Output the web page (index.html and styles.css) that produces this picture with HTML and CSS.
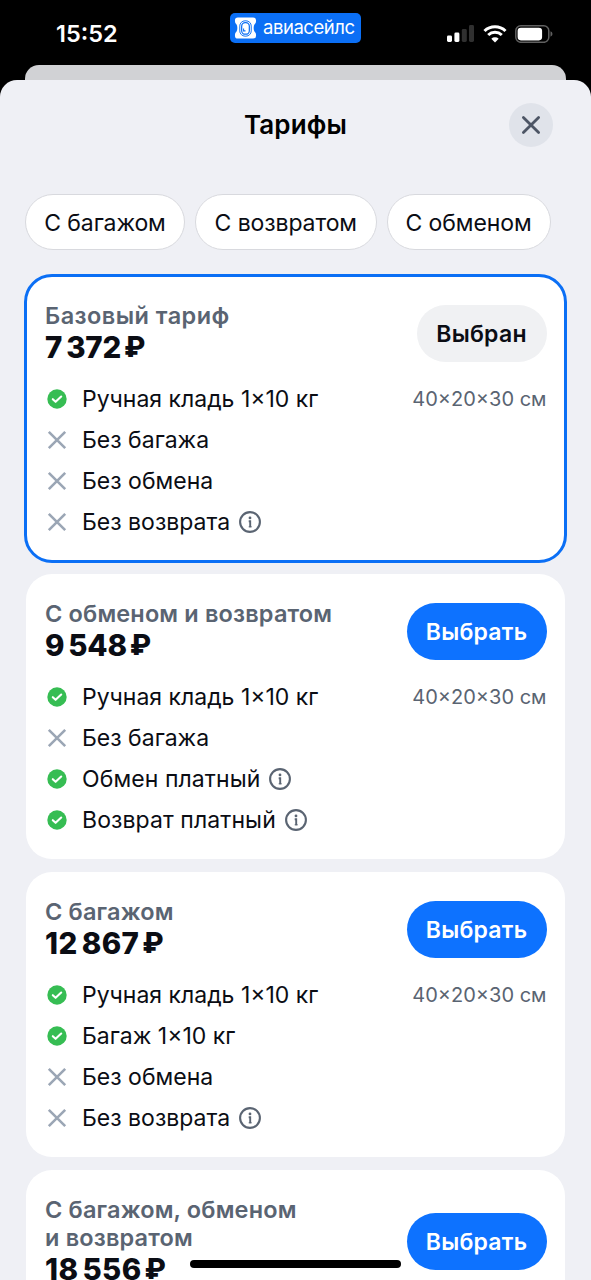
FILE: index.html
```html
<!DOCTYPE html>
<html lang="ru">
<head>
<meta charset="utf-8">
<title>Тарифы</title>
<link rel="stylesheet" href="styles.css">
</head>
<body>
<svg class="defs" width="0" height="0" aria-hidden="true">
  <symbol id="check" viewBox="0 0 24 24"><circle cx="12" cy="12" r="9.7" fill="#36bd53"/><path d="M7.800 12.200l2.800 2.600 5.600-5.300" fill="none" stroke="#fff" stroke-width="2.100" stroke-linecap="round" stroke-linejoin="round"/></symbol>
  <symbol id="cross" viewBox="0 0 24 24"><path d="M3.800 3.800l16.400 16.400M20.200 3.800L3.800 20.200" fill="none" stroke="#9ba6b5" stroke-width="2.600"/></symbol>
  <symbol id="info" viewBox="0 0 24 24"><circle cx="12" cy="12" r="9.9" fill="none" stroke="#5a6472" stroke-width="2.100"/><circle cx="12" cy="7.900" r="1.400" fill="#5a6472"/><path d="M10.700 11.200h1.500v6" fill="none" stroke="#5a6472" stroke-width="1.900"/><path d="M10.700 16.800h3" stroke="#5a6472" stroke-width="1"/></symbol>
</svg>
<div class="screen">
  <header class="status">
    <div class="time">15:52</div>
    <div class="brand">
      <svg class="brand-mark" viewBox="0 0 24 24"><path d="M4 1h16q3 0 3 3v1q0 2-1.500 3Q20.500 9 20.500 12t1 4Q23 17 23 19v1q0 3-3 3H4q-3 0-3-3v-1q0-2 1.500-3 1-1 1-4t-1-4Q1 7 1 5V4q0-3 3-3z" fill="#fff"/><rect x="6" y="4.500" width="12" height="16" rx="5.500" fill="none" stroke="#0b6ff5" stroke-width="1"/><rect x="8" y="6.500" width="8" height="12" rx="3.700" fill="none" stroke="#0b6ff5" stroke-width="1.300"/><path d="M10 12.500v2.500h2" fill="none" stroke="#0b6ff5" stroke-width="1.100"/></svg>
      <span class="brand-name">авиасейлс</span>
    </div>
    <div class="indicators">
      <svg width="28" height="18" viewBox="0 0 28 18"><rect x="0" y="10.500" width="5" height="6.500" rx="1.400" fill="#fff"/><rect x="7.400" y="7.500" width="5" height="9.500" rx="1.400" fill="#fff"/><rect x="14.800" y="4" width="5" height="13" rx="1.400" fill="#303030"/><rect x="22" y="0" width="5" height="17" rx="1.400" fill="#303030"/></svg>
      <svg width="24" height="18" viewBox="0 0 24 18"><path d="M1.500 6a15.200 15.200 0 0 1 21 0" fill="none" stroke="#fff" stroke-width="3.100"/><path d="M5.200 10a10 10 0 0 1 13.600 0" fill="none" stroke="#fff" stroke-width="3"/><path d="M12 17.500l-3.700-3.700a5.400 5.400 0 0 1 7.400 0z" fill="#fff"/></svg>
      <svg width="38" height="18" viewBox="0 0 38 18"><rect x=".8" y=".8" width="33" height="16.500" rx="5" fill="none" stroke="#606060" stroke-width="1.500"/><rect x="2.600" y="2.700" width="24.500" height="12.700" rx="3.300" fill="#fff"/><path d="M35.500 6.300q2 .8 2 2.700t-2 2.700z" fill="#606060"/></svg>
    </div>
  </header>
  <div class="sheet-behind"></div>
  <main class="sheet">
    <div class="titlebar">
      <h1 class="title">Тарифы</h1>
      <button class="close" aria-label="Закрыть"><svg width="20" height="20" viewBox="0 0 20 20"><path d="M2.400 2.400l15.200 15.200M17.600 2.400L2.400 17.600" stroke="#4d5565" stroke-width="2.800" stroke-linecap="round"/></svg></button>
    </div>
    <div class="chips">
      <button class="chip chip-a">С багажом</button>
      <button class="chip chip-b">С возвратом</button>
      <button class="chip chip-c">С обменом</button>
    </div>
    <div class="cards">
      <section class="card selected">
        <div class="head"><div><h2 class="name name-wide">Базовый тариф</h2><div class="price">7<i class="sp"></i>372<span class="rub">₽</span></div></div><button class="btn chosen">Выбран</button></div>
        <ul class="list">
          <li class="row"><svg class="ic"><use href="#check"/></svg><span>Ручная кладь 1×10 кг</span><span class="dim">40×20×30 см</span></li>
          <li class="row"><svg class="ic"><use href="#cross"/></svg><span>Без багажа</span></li>
          <li class="row"><svg class="ic"><use href="#cross"/></svg><span>Без обмена</span></li>
          <li class="row"><svg class="ic"><use href="#cross"/></svg><span>Без возврата</span><svg class="info"><use href="#info"/></svg></li>
        </ul>
      </section>
      <section class="card">
        <div class="head"><div><h2 class="name">С обменом и возвратом</h2><div class="price">9<i class="sp"></i>548<span class="rub">₽</span></div></div><button class="btn">Выбрать</button></div>
        <ul class="list">
          <li class="row"><svg class="ic"><use href="#check"/></svg><span>Ручная кладь 1×10 кг</span><span class="dim">40×20×30 см</span></li>
          <li class="row"><svg class="ic"><use href="#cross"/></svg><span>Без багажа</span></li>
          <li class="row"><svg class="ic"><use href="#check"/></svg><span class="paid">Обмен платный</span><svg class="info"><use href="#info"/></svg></li>
          <li class="row"><svg class="ic"><use href="#check"/></svg><span class="paid">Возврат платный</span><svg class="info"><use href="#info"/></svg></li>
        </ul>
      </section>
      <section class="card">
        <div class="head"><div><h2 class="name">С багажом</h2><div class="price price-long">12<i class="sp"></i>867<span class="rub">₽</span></div></div><button class="btn">Выбрать</button></div>
        <ul class="list">
          <li class="row"><svg class="ic"><use href="#check"/></svg><span>Ручная кладь 1×10 кг</span><span class="dim">40×20×30 см</span></li>
          <li class="row"><svg class="ic"><use href="#check"/></svg><span>Багаж 1×10 кг</span></li>
          <li class="row"><svg class="ic"><use href="#cross"/></svg><span>Без обмена</span></li>
          <li class="row"><svg class="ic"><use href="#cross"/></svg><span>Без возврата</span><svg class="info"><use href="#info"/></svg></li>
        </ul>
      </section>
      <section class="card">
        <div class="head"><div><h2 class="name">С багажом, обменом<br>и возвратом</h2><div class="price price-long">18<i class="sp"></i>556<span class="rub">₽</span></div></div><button class="btn">Выбрать</button></div>
      </section>
    </div>
  </main>
  <div class="home"></div>
</div>
</body>
</html>
```
FILE: styles.css
```css
* { box-sizing: border-box; }
html, body { margin: 0; height: 1280px; overflow: hidden; background: #000; }
body { font-family: Inter, "Liberation Sans", sans-serif; color: #0b0d14; }
button { font: inherit; border: 0; padding: 0; color: inherit; white-space: nowrap; }
h1, h2, ul { margin: 0; padding: 0; }
.defs { display: block; height: 0; }
.screen { position: relative; width: 591px; height: 1280px; overflow: hidden; display: flex; flex-direction: column; }
.status { height: 65px; flex: none; display: grid; grid-template-columns: 230px 131px 1fr; color: #fff; }
.time { padding: 19px 0 0 56px; font-size: 23.500px; line-height: 29px; font-weight: 600; letter-spacing: 0; }
.brand { margin-top: 13px; height: 30px; border-radius: 5px; background: #0b6ff5; display: flex; align-items: center; padding-left: 4px; }
.brand-mark { width: 23px; height: 24px; }
.brand-name { margin: -3px 0 0 6px; font-size: 18.500px; line-height: 24px; font-weight: 400; letter-spacing: -.45px; }
.indicators { display: flex; gap: 8px; padding: 25px 0 0 86px; }
.indicators svg { flex: none; }
.sheet-behind { flex: none; height: 15px; margin: 0 25px 0 25px; background: #d1d2d5; border-radius: 14px 14px 0 0; }
.sheet { flex: none; height: 1200px; background: #eff0f5; border-radius: 17px 17px 0 0; overflow: hidden; }
.titlebar { height: 114px; padding: 23px 38px 0; display: grid; grid-template-columns: 44px 1fr 44px; }
.title { grid-column: 2; text-align: center; color: #000; font-size: 26px; line-height: 44px; font-weight: 600; letter-spacing: .15px; }
.close { width: 44px; height: 44px; border-radius: 50%; background: #e0e3ea; display: grid; place-items: center; }
.chips { display: flex; gap: 10px; padding-left: 25px; }
.chip { height: 56px; border: 1.500px solid #d8d9de; border-radius: 28px; background: #fff; font-size: 23px; letter-spacing: -.1px; padding-top: 1px; }
.chip-a { width: 160px; }
.chip-b { width: 181.500px; }
.chip-c { width: 164px; }
.cards { padding: 26px 26px 0; display: flex; flex-direction: column; gap: 13px; }
.card { height: 285px; padding: 25px 18.500px 0 19px; border-radius: 26px; background: #fff; }
.selected { margin: -2px; height: 289px; padding: 24px 17.500px 0 18px; border: 3px solid #0b6ff5; border-radius: 28px; }
.head { display: flex; justify-content: space-between; align-items: center; }
.name { padding-top: 1px; margin-bottom: -1px; font-size: 23.500px; line-height: 28px; font-weight: 600; color: #5a6472; letter-spacing: .16px; }
.name-wide { letter-spacing: .45px; }
.price { font-size: 29.500px; line-height: 36px; font-weight: 800; display: flex; letter-spacing: -.2px; }
.price-long { letter-spacing: .4px; }
.sp { width: 4px; }
.rub { margin-left: 3px; font-size: 28px; }
.btn { width: 140px; height: 57px; padding-top: 1px; border-radius: 28.500px; background: #0d72ff; color: #fff; font-size: 23px; font-weight: 600; letter-spacing: .25px; }
.chosen { width: 130px; background: #f0f1f3; color: #0b0d14; }
.list { list-style: none; margin-top: 13px; }
.row { height: 41px; display: flex; align-items: center; font-size: 23px; white-space: nowrap; }
.row span { padding-top: 1px; }
.row .paid { letter-spacing: .09px; }
.ic { width: 24px; height: 24px; margin-right: 13px; }
.info { width: 24px; height: 24px; margin-left: 8px; }
.row .dim { margin-left: auto; font-size: 20px; color: #5a6472; }
.home { position: absolute; left: 190px; bottom: 12.500px; width: 211px; height: 8px; border-radius: 4px; background: #000; }
```
